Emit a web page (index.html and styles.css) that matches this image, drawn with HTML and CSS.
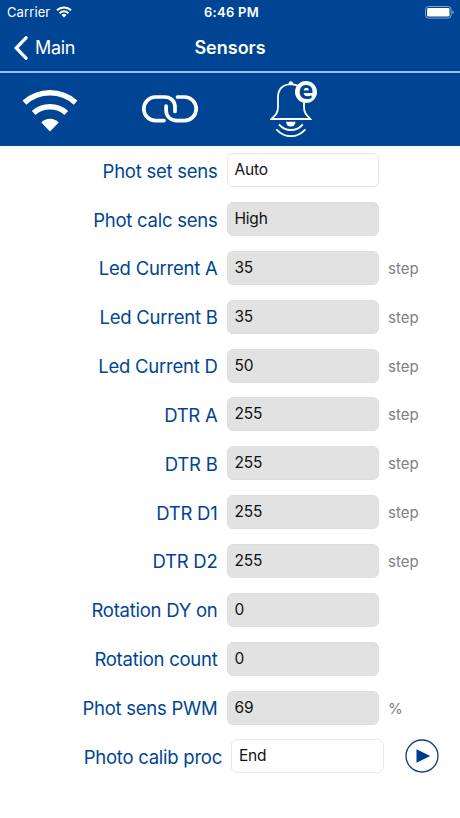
FILE: index.html
```html
<!DOCTYPE html>
<html lang="en">
<head>
    <meta charset="UTF-8">
    <meta name="viewport" content="width=device-width, initial-scale=1.0">
    <title>Sensors</title>
    <link rel="stylesheet" href="styles.css">
</head>
<body>

    <header class="header">
        <div class="status-bar">
            <div class="carrier">
                <span>Carrier</span>
                <svg width="16" height="12" viewBox="0 0 16 12" fill="none" stroke="#fff" stroke-width="2">
                    <path d="M1 4.4a10 10 0 0 1 14 0"/>
                    <path d="M3.6 7.2a6.2 6.2 0 0 1 8.8 0"/>
                    <path d="M8 11.6L5.5 9a3.6 3.6 0 0 1 5 0z" fill="#fff" stroke="none"/>
                </svg>
            </div>
            <span class="time">6:46 PM</span>
            <svg class="battery" width="29" height="13" viewBox="0 0 29 13">
                <rect x=".5" y=".5" width="25.6" height="11.6" rx="3" fill="none" stroke="#7fa2cb"/>
                <rect x="2.1" y="2.1" width="22.4" height="8.5" rx="1.4" fill="#fff"/>
                <path d="M27.3 4.3q1.4.6 1.4 2t-1.4 2z" fill="#7fa2cb"/>
            </svg>
        </div>

        <nav class="nav">
            <a class="back">
                <svg width="14" height="24" viewBox="0 0 14 24">
                    <path d="M12 1.8L2.2 12 12 22.2" fill="none" stroke="#fff" stroke-width="3.3" stroke-linecap="round"/>
                </svg>
                <span>Main</span>
            </a>
            <h1>Sensors</h1>
        </nav>

        <div class="toolbar">
            <svg class="icon-wifi" width="56" height="44" viewBox="0 0 56 44">
                <g fill="none" stroke="#fff" stroke-width="5.6">
                    <path d="M2.4 13.6Q13.5 3.7 28 3.7t25.6 9.9"/>
                    <path d="M11.7 24Q18.5 17.8 28 17.8T44.3 24"/>
                </g>
                <path d="M28 42.6L19.3 33.4Q23 29.8 28 29.8t8.7 3.6z" fill="#fff"/>
            </svg>
            <svg class="icon-link" width="56" height="28" viewBox="0 0 56 28" fill="none" stroke="#fff" stroke-width="3.7" stroke-linecap="round">
                <path d="M22 25.6H13.5a11.7 11.8 0 0 1 0-23.6H22.5c6.5 0 10.5 4.3 10.5 10V16.5"/>
                <path d="M35.5 2H42.5a11.7 11.8 0 0 1 0 23.6H35c-6.5 0-10.9-4.3-10.9-10V11"/>
            </svg>
            <div class="alarm">
                <svg width="46" height="58" viewBox="0 0 46 58" fill="none" stroke="#fff" stroke-width="1.8">
                    <path d="M20.8 4.2C11.5 4.8 8 10.5 8 17.5V27c0 6-2.4 8-6.5 12H40.3C36.5 35 34 33 34 27V20M20.8 4.2c4 0 6.5 1.2 8.5 3"/>
                    <path d="M18.6 4a2.2 2.8 0 0 1 4.4 0z" fill="#fff" stroke="none"/>
                    <path d="M16 41.8h9.6a4.8 4.8 0 0 1-9.6 0z" fill="#fff" stroke="none"/>
                    <path d="M9 44.3q4.8 5.7 11.9 5.7t11.9-5.7"/>
                    <path d="M6.4 49.3q6.3 6.9 14.5 6.9t14.5-6.9"/>
                </svg>
                <span class="alarm-badge">e</span>
            </div>
        </div>
    </header>

    <main class="settings">
        <div class="row">
            <label>Phot set sens</label>
            <div class="field editable">Auto</div>
        </div>
        <div class="row">
            <label>Phot calc sens</label>
            <div class="field">High</div>
        </div>
        <div class="row">
            <label>Led Current A</label>
            <div class="field">35</div>
            <span class="unit">step</span>
        </div>
        <div class="row">
            <label>Led Current B</label>
            <div class="field">35</div>
            <span class="unit">step</span>
        </div>
        <div class="row">
            <label>Led Current D</label>
            <div class="field">50</div>
            <span class="unit">step</span>
        </div>
        <div class="row">
            <label>DTR A</label>
            <div class="field">255</div>
            <span class="unit">step</span>
        </div>
        <div class="row">
            <label>DTR B</label>
            <div class="field">255</div>
            <span class="unit">step</span>
        </div>
        <div class="row">
            <label>DTR D1</label>
            <div class="field">255</div>
            <span class="unit">step</span>
        </div>
        <div class="row">
            <label>DTR D2</label>
            <div class="field">255</div>
            <span class="unit">step</span>
        </div>
        <div class="row">
            <label>Rotation DY on</label>
            <div class="field">0</div>
        </div>
        <div class="row">
            <label>Rotation count</label>
            <div class="field">0</div>
        </div>
        <div class="row">
            <label>Phot sens PWM</label>
            <div class="field">69</div>
            <span class="unit">%</span>
        </div>
        <div class="row row-action">
            <label>Photo calib proc</label>
            <div class="field editable">End</div>
            <button class="play" aria-label="Start">
                <svg width="34" height="34" viewBox="0 0 34 34">
                    <circle cx="17" cy="17" r="16" fill="none" stroke="#0b3d8c" stroke-width="1.3"/>
                    <path d="M11.5 10.3L25.2 17 11.5 23.7z" fill="#003a8c"/>
                </svg>
            </button>
        </div>
    </main>

</body>
</html>
```
FILE: styles.css
```css
* {
    box-sizing: border-box;
}

body {
    margin: 0;
    font-family: Inter, "Liberation Sans", sans-serif;
    background-color: #fff;
}

svg {
    display: block;
}

.header {
    height: 145.8px;
    color: #fff;
    background-color: #004593;
}

.status-bar {
    display: grid;
    grid-template-columns: 1fr auto 1fr;
    align-items: center;
    height: 24px;
    padding: 0 6px 0 7px;
    font-size: 13px;
}

.carrier {
    display: flex;
    align-items: center;
    gap: 6px;
    letter-spacing: 0.1px;
}

.time {
    padding-left: 2px;
    font-weight: 600;
    letter-spacing: 0.3px;
}

.battery {
    justify-self: end;
}

.nav {
    display: grid;
    grid-template-columns: 1fr auto 1fr;
    align-items: center;
    height: 49px;
    padding: 0 14px;
    border-bottom: 2px solid #9dbcf0;
}

.nav h1 {
    margin: 0;
    font-size: 18px;
    font-weight: 600;
}

.back {
    display: flex;
    align-items: center;
    gap: 7px;
    font-size: 18px;
    letter-spacing: -0.3px;
}

.toolbar {
    display: flex;
    align-items: center;
    height: 72px;
    padding-left: 22px;
}

.icon-wifi {
    margin-top: 4px;
}

.icon-link {
    margin-left: 64px;
}

.alarm {
    position: relative;
    margin-left: 72px;
}

.alarm-badge {
    position: absolute;
    top: 1px;
    left: 25px;
    width: 22px;
    height: 22px;
    border-radius: 50%;
    background-color: #fff;
    color: #004593;
    font: bold 25px/16px "Noto Sans", sans-serif;
    text-align: center;
}

.row {
    display: grid;
    grid-template-columns: 217.5px 152.5px auto;
    column-gap: 9px;
    align-items: center;
    height: 48.85px;
}

.row label {
    padding-top: 1px;
    text-align: right;
    font-size: 18.5px;
    letter-spacing: -0.25px;
    color: #004593;
    white-space: nowrap;
}

.field {
    height: 34px;
    padding-left: 7px;
    border: 1px solid #dedede;
    border-radius: 6px;
    background-color: #e2e2e2;
    font-size: 15.5px;
    line-height: 32px;
    letter-spacing: -0.2px;
    color: #111;
}

.editable {
    border-color: #e6e6e6;
    background-color: #fff;
}

.unit {
    padding-top: 1px;
    font-size: 15px;
    color: #808080;
}

.row-action {
    grid-template-columns: 222px 152.5px auto;
}

.play {
    margin-left: 12.5px;
    padding: 0;
    border: none;
    background: none;
}
```
